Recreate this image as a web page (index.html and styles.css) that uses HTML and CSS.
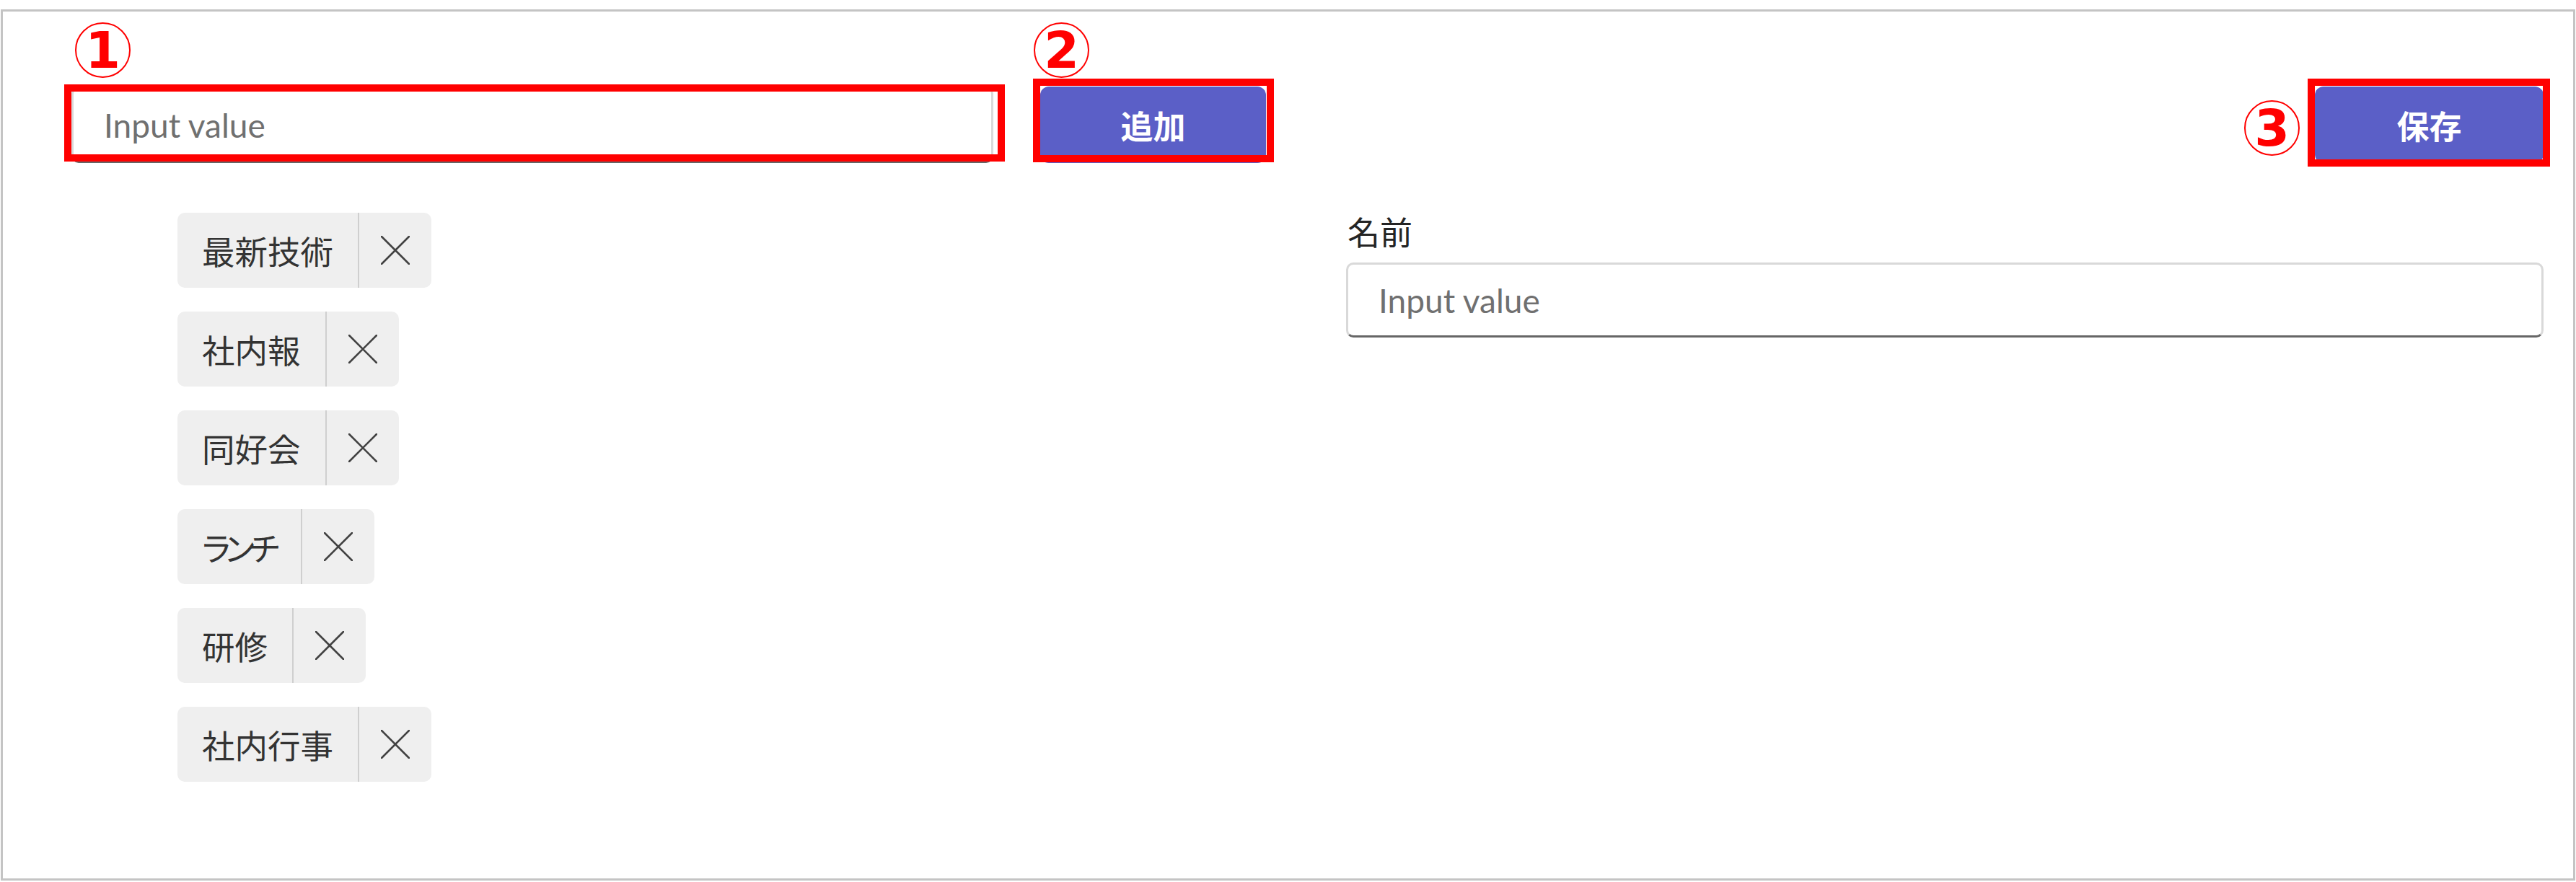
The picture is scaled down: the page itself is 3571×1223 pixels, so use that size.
FILE: index.html
```html
<!DOCTYPE html>
<html lang="ja">
<head>
<meta charset="utf-8">
<title>Tags</title>
<link rel="stylesheet" href="styles.css">
</head>
<body>
<div class="frame">
  <div class="toolbar">
    <input class="text-input wide" type="text" placeholder="Input value">
    <button class="btn add">追加</button>
    <button class="btn save">保存</button>
  </div>
  <div class="content">
    <ul class="tags">
      <li class="tag"><span class="tag-text">最新技術</span><span class="tag-close"><svg viewBox="0 0 40 40" width="40" height="40"><path d="M1 1L39 39M39 1L1 39"/></svg></span></li>
      <li class="tag"><span class="tag-text">社内報</span><span class="tag-close"><svg viewBox="0 0 40 40" width="40" height="40"><path d="M1 1L39 39M39 1L1 39"/></svg></span></li>
      <li class="tag"><span class="tag-text">同好会</span><span class="tag-close"><svg viewBox="0 0 40 40" width="40" height="40"><path d="M1 1L39 39M39 1L1 39"/></svg></span></li>
      <li class="tag"><span class="tag-text kana">ランチ</span><span class="tag-close"><svg viewBox="0 0 40 40" width="40" height="40"><path d="M1 1L39 39M39 1L1 39"/></svg></span></li>
      <li class="tag"><span class="tag-text">研修</span><span class="tag-close"><svg viewBox="0 0 40 40" width="40" height="40"><path d="M1 1L39 39M39 1L1 39"/></svg></span></li>
      <li class="tag"><span class="tag-text">社内行事</span><span class="tag-close"><svg viewBox="0 0 40 40" width="40" height="40"><path d="M1 1L39 39M39 1L1 39"/></svg></span></li>
    </ul>
    <div class="field">
      <label class="field-label">名前</label>
      <input class="text-input" type="text" placeholder="Input value">
    </div>
  </div>
</div>

<div class="mark box1"></div>
<div class="mark box2"></div>
<div class="mark box3"></div>
<span class="num n1">1</span>
<span class="num n2">2</span>
<span class="num n3">3</span>
</body>
</html>
```

FILE: styles.css
```css
html, body {
  margin: 0;
  padding: 0;
  background: #ffffff;
}

body {
  font-family: "Lato", "Noto Sans CJK JP", sans-serif;
  color: #242424;
}

.frame {
  box-sizing: border-box;
  margin: 13px 0 0 1px;
  width: 3569px;
  height: 1208px;
  border: 3px solid #c4c4c4;
  padding: 104px 41px 0 95px;
}

.toolbar {
  display: flex;
  align-items: flex-start;
  height: 106px;
}

.text-input {
  box-sizing: border-box;
  display: block;
  width: 100%;
  height: 104px;
  margin: 0;
  padding: 0 42px;
  border: 3px solid #d9d9d9;
  border-bottom-color: #666666;
  border-radius: 10px;
  background: #ffffff;
  font-family: "Lato", "Noto Sans CJK JP", sans-serif;
  font-size: 46px;
  color: #242424;
  outline: none;
}

.text-input::placeholder {
  color: #707070;
  opacity: 1;
}

.text-input.wide {
  width: 1278px;
  height: 106px;
  flex: none;
}

.btn {
  box-sizing: border-box;
  flex: none;
  height: 106px;
  margin: 0;
  padding: 0;
  border: none;
  border-radius: 12px;
  background: #5b5fc7;
  color: #ffffff;
  font-family: "Noto Sans CJK JP", sans-serif;
  font-size: 45px;
  font-weight: 700;
  line-height: 1;
}

.btn.add {
  width: 313px;
  margin-left: 65px;
}

.btn.save {
  width: 317px;
  margin-left: auto;
}

.content {
  display: grid;
  grid-template-columns: 1767px 1fr;
  margin-top: 69px;
}

.tags {
  list-style: none;
  margin: 0;
  padding: 0 0 0 147px;
  display: flex;
  flex-direction: column;
  align-items: flex-start;
  gap: 33px;
}

.tag {
  display: flex;
  align-items: stretch;
  height: 104px;
  background: #efefef;
  border-radius: 10px;
}

.tag-text {
  display: flex;
  align-items: center;
  padding: 0 34px;
  font-family: "Noto Sans CJK JP", sans-serif;
  font-size: 45.5px;
  font-feature-settings: "palt";
  color: #333333;
  border-right: 2px solid #cfcfcf;
}

.tag-text.kana {
  letter-spacing: -7px;
  padding-right: 37px;
}

.tag-close {
  display: flex;
  align-items: center;
  justify-content: center;
  width: 100px;
}

.tag-close svg {
  display: block;
  fill: none;
  stroke: #424242;
  stroke-width: 2.6;
  stroke-linecap: round;
}

.field {
  display: flex;
  flex-direction: column;
}

.field-label {
  display: block;
  font-family: "Noto Sans CJK JP", sans-serif;
  font-size: 45px;
  line-height: 60px;
  color: #242424;
  margin: -4px 0 13px 2px;
}

/* annotation overlays */
.mark {
  position: absolute;
  box-sizing: border-box;
  border: 10px solid #ff0000;
}

.box1 { left: 89px;   top: 117px; width: 1304px; height: 107px; }
.box2 { left: 1432px; top: 109px; width: 334px;  height: 116px; }
.box3 { left: 3199px; top: 109px; width: 336px;  height: 122px; }

.num {
  position: absolute;
  box-sizing: border-box;
  width: 77px;
  height: 77px;
  border: 2px solid #ff0000;
  border-radius: 50%;
  display: flex;
  align-items: center;
  justify-content: center;
  font-family: "DejaVu Sans", sans-serif;
  font-weight: 700;
  font-size: 70px;
  line-height: 1;
  color: #ff0000;
}

.n1 { left: 104px;  top: 31px; }
.n2 { left: 1433px; top: 31px; }
.n3 { left: 3111px; top: 139px; }
```
